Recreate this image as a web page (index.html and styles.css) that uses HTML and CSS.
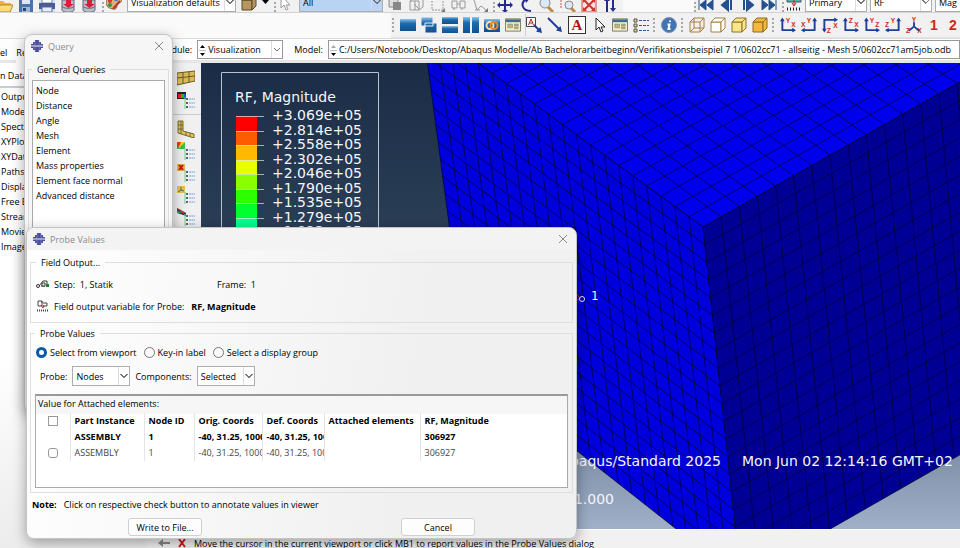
FILE: index.html
```
<!DOCTYPE html>
<html lang="en">
<head>
	<meta charset="utf-8">
	<title>Abaqus/CAE - Visualization</title>
	<meta name="viewport" content="width=device-width,initial-scale=1.0">
	<link rel="stylesheet" href="styles.css">
</head>
<body>
	<svg class="defs" aria-hidden="true">
		<defs>
			<linearGradient id="blue" x2="0" y2="1"><stop stop-color="#8cc4ea"/><stop offset=".35" stop-color="#1e6cae"/><stop offset="1" stop-color="#124f8c"/></linearGradient>
			<linearGradient id="sky" x2="0" y2="1"><stop stop-color="#1b2d46"/><stop offset=".4" stop-color="#2c4058"/><stop offset=".85" stop-color="#8292ab"/><stop offset="1" stop-color="#a0b0c8"/></linearGradient>
			<symbol id="logo" viewBox="0 0 12 12"><path d="M4 0h4v2H4zM2 2h8v2H2zM0 4h12v1.500H0zM0 6.500h12V8H0zM2 8h8v2H2zM4 10h4v2H4z" fill="#4c4fa0"/><path d="M4 0v12M8 0v12" stroke="#9d9fd4" stroke-width=".5"/></symbol>
			<symbol id="cross" viewBox="0 0 10 10"><path d="M1 1l8 8M9 1L1 9" stroke="#8a8a8a" fill="none"/></symbol>
			<symbol id="db" viewBox="0 0 16 16"><path d="M2 3v10c0 3 12 3 12 0V3z" fill="#b9c0ca" stroke="#667"/><path d="M2 9c0 3 12 3 12 0" fill="none" stroke="#667"/><path d="M6 2h5v5h3l-5.500 4L3 7h3z" fill="#d5203a"/></symbol>
			<symbol id="cubew" viewBox="0 0 16 16"><path d="M1 5h10v10H1zM5 1h10v10H5M1 5l4-4M11 5l4-4M11 15l4-4M1 15l4-4M5 1v10" fill="none" stroke="#a8803c"/></symbol>
			<symbol id="cube" viewBox="0 0 16 16"><path d="M1 5h10v10H1z"/><path d="M1 5l4-4h10l-4 4z"/><path d="M11 5l4-4v10l-4 4z"/></symbol>
			<symbol id="panel" viewBox="0 0 17 16"><path d="M.5 1.500h16v13H.5z" fill="#f4edc9" stroke="#7a7a5c"/><path d="M1 2h15v3H1z" fill="#3f6a9e"/><path d="M3 7h5v4H3zM10 7h4v2h-4zM10 10h4v2h-4z" fill="#b9b48a" stroke="#7a7a5c" stroke-width=".5"/></symbol>
			<symbol id="rows" viewBox="0 0 18 18"><path d="M9 8h2M9 12h2M9 16h2" stroke="#567" stroke-width="2"/><path d="M12 8h6M12 12h6M12 16h6" stroke="#6e9fd8" stroke-dasharray="2 .5"/><path d="M8 6v12" stroke="#7c8" stroke-width="1"/></symbol>
			<symbol id="axes" viewBox="0 0 17 16"><path d="M2.500 14V2M2 13.500h13" fill="none" stroke="#1d3f96" stroke-width="2"/><path d="M0 4l2.500-4L5 4zM13 11l4 2.500-4 2.500z" fill="#1d3f96"/></symbol>
			<symbol id="axesl" viewBox="0 0 17 16"><path d="M14.500 14V2M15 13.500H2" fill="none" stroke="#1d3f96" stroke-width="2"/><path d="M12 4l2.500-4L17 4zM4 11l-4 2.500L4 16z" fill="#1d3f96"/></symbol>
		</defs>
	</svg>

	<header class="toolbars">
		<div class="bar bar-top">
			<div class="group file">
				<svg class="ico" viewBox="0 0 16 16"><path d="M0 15V4h6l2 2h6v9z" fill="#e8b33a"/><path d="M0 15l3-7h13l-3 7z" fill="#ffdc76" stroke="#b98a25"/></svg>
				<svg class="ico" viewBox="0 0 16 16"><path d="M1 1h14v14H1z" fill="#4874ad"/><path d="M4 1h8v6H4z" fill="#dde6f2"/><path d="M4 10h8v5H4z" fill="#9db4d2"/><path d="M5 11h3v3H5z" fill="#26456f"/></svg>
				<svg class="ico hot" viewBox="0 0 16 16"><path d="M3 0h10v6H3z" fill="#fff" stroke="#789"/><path d="M0 6h16v6H0z" fill="#4b5c9a"/><path d="M3 10h10v5H3z" fill="#e9effa" stroke="#5a6a9c"/></svg>
				<svg class="ico"><use href="#db"/></svg>
				<svg class="ico"><use href="#db"/></svg>
			</div>
			<i class="grip"></i>
			<div class="group">
				<svg class="ico" viewBox="0 0 16 16"><path d="M8 1c9 0 9 6 5 7s0 6-5 6-8-3-8-7 4-6 8-6z" fill="#d9b077" stroke="#876338"/><circle cx="4" cy="6" r="2" fill="#d33"/><circle cx="4" cy="10" r="2" fill="#2a9a45"/><circle cx="10" cy="4" r="2" fill="#346fd0"/><path d="M7 14l7-8" stroke="#b33" stroke-width="2"/></svg>
				<select class="drop wide" aria-label="Color code"><option>Visualization defaults</option></select>
				<svg class="ico" viewBox="0 0 16 16"><g fill="#b59662" stroke="#5f4821"><use href="#cube"/></g></svg>
				<svg class="caret" viewBox="0 0 7 4"><path d="M0 0h7L3.500 4z"/></svg>
			</div>
			<i class="grip"></i>
			<div class="group">
				<svg class="ico" viewBox="0 0 16 16"><path d="M3 0v13l3-3 2 5 2-1-2-4h4z" fill="#fff" stroke="#999"/></svg>
				<select class="drop blue" aria-label="Selection filter"><option>All</option></select>
			</div>
			<div class="group muted">
				<svg class="ico" viewBox="0 0 16 16"><path d="M1 1h9v9H1z" fill="#ddd" stroke="#888"/><path d="M5 5h8v8H5z" fill="#888"/></svg>
				<svg class="ico" viewBox="0 0 16 16"><path d="M1 4h9v9H1zM5 1h9v9M1 4l4-3M10 13l4-3M5 7l6 6M6 4v9" fill="none" stroke="#999"/></svg>
				<svg class="ico" viewBox="0 0 16 16"><path d="M2 1v12h11V1" fill="none" stroke="#999" stroke-dasharray="2 1"/><path d="M11 15l4-4v4z" fill="#777"/></svg>
				<svg class="ico" viewBox="0 0 16 16"><path d="M1 4h5v7H1zM9 4h5v7H9zM3 13v-2M11 13v-2M6 7h3" fill="none" stroke="#999"/></svg>
				<svg class="ico" viewBox="0 0 16 16"><path d="M2 3l3 10 4-4 5 4M3 13h5" fill="none" stroke="#999"/><path d="M12 15l4-4v4z" fill="#777"/></svg>
			</div>
			<i class="grip"></i>
			<div class="group">
				<svg class="ico" viewBox="0 0 16 16"><path d="M8 1v14M1 8h14" stroke="#262a8c" stroke-width="2"/><path d="M8 0l3 3H5zM8 16l3-3H5zM0 8l3-3v6zM16 8l-3-3v6z" fill="#262a8c"/></svg>
				<svg class="ico" viewBox="0 0 16 16"><path d="M13 14C4 14 2 6 8 2" fill="none" stroke="#262a8c" stroke-width="2"/><path d="M6 0h7L8 6z" fill="#262a8c"/></svg>
				<svg class="ico" viewBox="0 0 16 16"><circle cx="6" cy="6" r="5" fill="#dbe8f6" stroke="#888"/><path d="M9 10l5 5" stroke="#c08a45" stroke-width="3"/></svg>
				<svg class="ico" viewBox="0 0 16 16"><path d="M1 11V2h10" fill="none" stroke="#c55" stroke-dasharray="2 1"/><circle cx="9" cy="8" r="4" fill="#dbe8f6" stroke="#888"/><path d="M11 11l4 4" stroke="#c08a45" stroke-width="3"/></svg>
				<svg class="ico" viewBox="0 0 16 16"><path d="M1 1h14v14H1z" fill="#fbe5e2" stroke="#c94a3f"/><path d="M3 3l10 10M13 3L3 13" stroke="#d2322a" stroke-width="2"/><path d="M2 2h4L2 6zM14 2h-4l4 4zM2 14h4l-4-4zM14 14h-4l4-4z" fill="#d2322a"/></svg>
				<svg class="ico" viewBox="0 0 16 16"><path d="M5 15V2M11 1v12" stroke="#262a8c" stroke-width="2"/><path d="M2 4l3-4 3 4zM8 11l3 4 3-4z" fill="#262a8c"/></svg>
			</div>
			<div class="blank"></div>
			<i class="grip"></i>
			<div class="group play">
				<svg class="ico" viewBox="0 0 16 16"><path d="M1 3v10M8 3v10L2 8zM15 3v10L9 8z" fill="#23508f" stroke="#23508f"/></svg>
				<svg class="ico" viewBox="0 0 16 16"><path d="M9 3v10L3 8zM12 3v10" fill="#23508f" stroke="#23508f" stroke-width="2"/></svg>
				<svg class="ico" viewBox="0 0 16 16"><path d="M7 3v10l6-5zM4 3v10" fill="#23508f" stroke="#23508f" stroke-width="2"/></svg>
				<svg class="ico" viewBox="0 0 16 16"><path d="M15 3v10M8 3v10l6-5zM1 3v10l6-5z" fill="#23508f" stroke="#23508f"/></svg>
			</div>
			<i class="grip"></i>
			<div class="group vars">
				<svg class="ico" viewBox="0 0 16 16"><path d="M1 0h14v7H1z" fill="#50b5a5" stroke="#456"/><path d="M8 4v6M6 8l2 3 2-3" stroke="#d02020" fill="none"/><path d="M1 14h14" stroke="#222" stroke-width="3" stroke-dasharray="1 2"/></svg>
				<select class="drop" aria-label="Variable type"><option>Primary</option></select>
				<select class="drop" aria-label="Variable"><option>RF</option></select>
				<select class="drop" aria-label="Component"><option>Mag</option></select>
			</div>
		</div>

		<div class="bar bar-view">
			<i class="grip"></i>
			<div class="group">
				<svg class="ico" viewBox="0 0 16 16"><path d="M0 2h16v12H0z" fill="url(#blue)"/></svg>
				<svg class="ico" viewBox="0 0 16 16"><path d="M0 0h12v9H0zM4 6h12v10H4z" fill="url(#blue)" stroke="#eef"/></svg>
				<svg class="ico" viewBox="0 0 16 16"><path d="M0 0h16v7H0z" fill="url(#blue)"/><path d="M0 9h16v7H0z" fill="url(#blue)"/></svg>
				<svg class="ico" viewBox="0 0 16 16"><path d="M0 0h7v16H0z" fill="url(#blue)"/><path d="M9 0h7v16H9z" fill="url(#blue)"/></svg>
				<svg class="ico" viewBox="0 0 16 16"><path d="M0 2h16v13H0z" fill="url(#blue)"/><g fill="none" stroke-width="2"><circle cx="6" cy="8.500" r="3.500" stroke="#ffe0a0"/><circle cx="10" cy="8.500" r="3.500" stroke="#f08a20"/></g></svg>
				<svg class="ico"><use href="#panel"/></svg>
			</div>
			<i class="sep"></i>
			<div class="group notes">
				<svg class="ico" viewBox="0 0 16 16"><path d="M.5.5h9v9h-9z" fill="#fff" stroke="#444"/><path d="M2.500 8L5 2l2.500 6M3.500 6h3" fill="none" stroke="#c01818"/><path d="M8 8l6 6" stroke="#1d3f96" stroke-width="2"/><path d="M16 16l-6-1.500 4.500-4.500z" fill="#1d3f96"/></svg>
				<svg class="ico" viewBox="0 0 16 16"><path d="M1 1l11 11" stroke="#1d3f96" stroke-width="2"/><path d="M15 15l-6-1.500 4.500-4.500z" fill="#1d3f96"/></svg>
				<b class="letter">A</b>
				<svg class="ico" viewBox="0 0 16 16"><path d="M5 1v12l3-3 2 5 2-1-2-4h4z" fill="#fff" stroke="#222"/></svg>
				<svg class="ico"><use href="#panel"/></svg>
				<svg class="ico" viewBox="0 0 16 16"><path d="M1 2h3v3H1zM1 7h3v3H1zM1 12h3v3H1z" fill="#ddd8a0" stroke="#554"/><path d="M6 3.500h10M6 8.500h10M6 13.500h10" stroke="#3a4fa0" stroke-dasharray="3 1"/></svg>
			</div>
			<i class="grip"></i>
			<svg class="ico" viewBox="0 0 16 16"><circle cx="8" cy="8" r="7.500" fill="#3f74b5" stroke="#7d93b4"/><path d="M9 3.500v1.500M6.500 7.500h2l-1 4.500h2" fill="none" stroke="#fff" stroke-width="2"/></svg>
			<i class="grip"></i>
			<div class="group">
				<svg class="ico"><use href="#cubew"/></svg>
				<svg class="ico" fill="#fff" stroke="#a8803c"><use href="#cube"/></svg>
				<svg class="ico" fill="#fbe58a" stroke="#8c7428"><use href="#cube"/></svg>
				<svg class="ico" fill="#f4b93c" stroke="#8c6a20"><use href="#cube"/></svg>
			</div>
			<i class="grip"></i>
			<div class="group red">
				<svg class="ico" viewBox="0 0 17 16"><use href="#axes"/><text x="6" y="6">Y</text><text x="12" y="10">X</text></svg>
				<svg class="ico" viewBox="0 0 17 16"><use href="#axesl"/><text x="6" y="6">Y</text><text x="0" y="10">X</text></svg>
				<svg class="ico" viewBox="0 0 17 16"><path d="M2.500 14V2.500H15" fill="none" stroke="#1d3f96" stroke-width="2"/><path d="M0 12l2.500 4L5 12zM13 0l4 2.500L13 5z" fill="#1d3f96"/><text x="12" y="11">X</text><text x="5" y="16">Z</text></svg>
				<svg class="ico" viewBox="0 0 17 16"><use href="#axes"/><text x="6" y="6">Z</text><text x="12" y="10">X</text></svg>
				<svg class="ico" viewBox="0 0 17 16"><use href="#axes"/><text x="6" y="6">Y</text><text x="12" y="10">Z</text></svg>
				<svg class="ico" viewBox="0 0 17 16"><use href="#axesl"/><text x="6" y="6">Y</text><text x="0" y="10">Z</text></svg>
				<svg class="ico" viewBox="0 0 17 16"><path d="M8.500 10V5M8 10l-5 4M9 10l5 4" fill="none" stroke="#1d3f96" stroke-width="2"/><text x="6" y="5">Y</text><text x="0" y="16">Z</text><text x="12" y="16">X</text></svg>
				<b class="num">1</b><b class="num">2</b>
			</div>
		</div>
	</header>

	<div class="context">
		<label for="module">Module:</label>
		<span class="spinbox">
			<svg class="spin" viewBox="0 0 7 14"><path d="M3.500 2L6 5H1zM3.500 13L6 10H1z"/><path d="M0 7.500h7" stroke="#bbb"/></svg>
			<select id="module" class="drop"><option>Visualization</option></select>
		</span>
		<label for="model">Model:</label>
		<span class="spinbox path">
			<svg class="spin" viewBox="0 0 7 14"><path d="M3.500 2L6 5H1z" fill="#aaa"/><path d="M3.500 13L6 10H1z"/><path d="M0 7.500h7" stroke="#bbb"/></svg>
			<input id="model" value="C:/Users/Notebook/Desktop/Abaqus Modelle/Ab Bachelorarbeitbeginn/Verifikationsbeispiel 7 1/0602cc71 - allseitig - Mesh 5/0602cc71am5job.odb">
		</span>
	</div>

	<main class="work">
		<aside class="tree">
			<div class="tabs"><span>el</span><span class="on">Results</span></div>
			<p class="session">n Data</p>
			<ul>
				<li>Output Databases</li>
				<li>Model Database</li>
				<li>Spectrums</li>
				<li>XYPlots</li>
				<li>XYData</li>
				<li>Paths</li>
				<li>Display Groups</li>
				<li>Free Body Cuts</li>
				<li>Streams</li>
				<li>Movies</li>
				<li>Images</li>
			</ul>
		</aside>
		<div class="stage">
			<div class="canvas-row">
				<nav class="toolbox">
					<svg class="tool" viewBox="0 0 18 18"><path d="M0 4l18-2v10L0 16z" fill="#d9bb5a" stroke="#6b5a22"/><path d="M0 9l18-2M6 3v12M12 3v11" stroke="#6b5a22"/></svg>
					<svg class="tool" viewBox="0 0 18 18"><path d="M0 1h9v7H0z" fill="#222"/><path d="M1 3h3v4H1z" fill="#d22"/><path d="M4 3h3v4H4z" fill="#2b2"/><path d="M7 3h2v4H7z" fill="#25d"/><use href="#rows"/></svg>
					<hr>
					<svg class="tool" viewBox="0 0 18 18"><path d="M1 1h5v10l11 3v4L1 13z" fill="#d9c765" stroke="#7b6a2a"/><path d="M1 5h5M1 9h5M4 1v13M9 12v4M13 13v4" stroke="#7b6a2a"/></svg>
					<svg class="tool" viewBox="0 0 18 18"><path d="M0 0h8v7H0z" fill="#3fbe4f"/><path d="M0 7V0h5z" fill="#e33"/><path d="M4 0h4L1 7z" fill="#ffd800"/><use href="#rows"/></svg>
					<svg class="tool" viewBox="0 0 18 18"><path d="M0 0h8v7H0z" fill="#efb04e"/><path d="M2 1l4 5M6 1L2 6" stroke="#c31414" stroke-width="2"/><use href="#rows"/></svg>
					<svg class="tool" viewBox="0 0 18 18"><path d="M0 0h8v7H0z" fill="#efc04e"/><path d="M4 1v3L1 6M4 4l3 1" fill="none" stroke="#475" stroke-width="1"/><use href="#rows"/></svg>
					<svg class="tool" viewBox="0 0 18 18"><path d="M0 0l9 5v3L0 5z" fill="#345"/><path d="M0 0l9 5H5z" fill="#c33"/><path d="M0 3l5 2H0z" fill="#3a4"/><use href="#rows"/></svg>
				</nav>
				<svg class="viewport" id="viewport">
					<rect width="100%" height="100%" fill="url(#sky)"/>
					<g transform="translate(-201 -63)">
						<g id="mesh"></g>
						<path d="M221.500 260V72.500h157V260" fill="none" stroke="#b9c3d0"/>
						<text x="235" y="102">RF, Magnitude</text>
						<g id="legend"></g>
						<path d="M574 291l6 7-6 5" fill="none" stroke="#e02020"/>
						<circle cx="582" cy="299" r="2.500" fill="none" stroke="#eee"/>
						<text x="591" y="300" class="mono">1</text>
						<text x="721" y="466" text-anchor="end">Abaqus/Standard 2025</text>
						<text x="742" y="466">Mon Jun 02 12:14:16 GMT+02</text>
						<text x="614" y="504" text-anchor="end">1.000</text>
					</g>
				</svg>
			</div>
			<footer class="prompt">
				<svg viewBox="0 0 12 8"><path d="M0 4l5-4v3h7v2H5v3z" fill="#888"/></svg>
				<svg class="stop" viewBox="0 0 10 10"><path d="M2 1l6 8M8 1L2 9" stroke="#d01818" stroke-width="2"/></svg>
				<span>Move the cursor in the current viewport or click MB1 to report values in the Probe Values dialog</span>
			</footer>
		</div>
	</main>

	<section class="window query">
		<div class="title"><svg><use href="#logo"/></svg><span>Query</span><button aria-label="Close"><svg><use href="#cross"/></svg></button></div>
		<fieldset>
			<legend>General Queries</legend>
			<ul>
				<li>Node</li>
				<li>Distance</li>
				<li>Angle</li>
				<li>Mesh</li>
				<li>Element</li>
				<li>Mass properties</li>
				<li>Element face normal</li>
				<li>Advanced distance</li>
			</ul>
		</fieldset>
	</section>

	<section class="window probe">
		<div class="title"><svg><use href="#logo"/></svg><span>Probe Values</span><button aria-label="Close"><svg><use href="#cross"/></svg></button></div>
		<fieldset class="field">
			<legend>Field Output...</legend>
			<div class="line">
				<svg viewBox="0 0 13 12"><path d="M3 8l4-5h4v4M5 8h4" fill="none" stroke="#333"/><circle cx="2" cy="8" r="1.500" fill="#fff" stroke="#333"/><path d="M6 5h3v3H6z" fill="#fff" stroke="#333"/><path d="M10 6h3v3h-3z" fill="#2a7a35"/></svg>
				<span class="step">Step: &nbsp;1, Statik</span><span>Frame: &nbsp;1</span>
			</div>
			<div class="line">
				<svg viewBox="0 0 13 12"><path d="M2 1h4v5H2zM7 3h4v3H7M5 2h2" fill="none" stroke="#444"/><path d="M5 5l2 3 1-3" fill="none" stroke="#c22"/><path d="M1 10.500h11" stroke="#444" stroke-width="2" stroke-dasharray="1 1"/></svg>
				<span>Field output variable for Probe:</span><b>RF, Magnitude</b>
			</div>
		</fieldset>
		<fieldset class="values">
			<legend>Probe Values</legend>
			<div class="radios">
				<label><input type="radio" name="from" checked>Select from viewport</label>
				<label><input type="radio" name="from">Key-in label</label>
				<label><input type="radio" name="from">Select a display group</label>
			</div>
			<div class="picks">
				<label for="probe">Probe:</label>
				<select id="probe" class="drop"><option>Nodes</option></select>
				<label for="comp">Components:</label>
				<select id="comp" class="drop"><option>Selected</option></select>
			</div>
			<div class="tablebox">
				<table>
					<caption>Value for Attached elements:</caption>
					<colgroup><col class="c1"><col class="c2"><col class="c3"><col class="c4"><col class="c5"><col class="c6"><col></colgroup>
					<thead>
						<tr><th><input type="checkbox" class="square" aria-label="Select all"></th><th>Part Instance</th><th>Node ID</th><th>Orig. Coords</th><th>Def. Coords</th><th>Attached elements</th><th>RF, Magnitude</th></tr>
					</thead>
					<tbody>
						<tr class="now"><td></td><td>ASSEMBLY</td><td>1</td><td>-40, 31.25, 1000</td><td>-40, 31.25, 1000</td><td></td><td>306927</td></tr>
						<tr><td><input type="checkbox" aria-label="Annotate node 1"></td><td>ASSEMBLY</td><td>1</td><td>-40, 31.25, 1000</td><td>-40, 31.25, 1000</td><td></td><td>306927</td></tr>
					</tbody>
				</table>
			</div>
		</fieldset>
		<p class="note"><b>Note:</b>Click on respective check button to annotate values in viewer</p>
		<div class="actions"><button>Write to File...</button><button>Cancel</button></div>
	</section>

	<script src="script.js"></script>
</body>
</html>
```
FILE: styles.css
```
* { margin: 0; padding: 0; box-sizing: border-box; }
body {
	height: 100vh;
	display: flex;
	flex-direction: column;
	overflow: hidden;
	position: relative;
	background: #fafafa;
	color: #000;
	font: 9px/15px "Open Sans", "Noto Sans", sans-serif;
}
ul { list-style: none; }
button, input, select { font: inherit; color: inherit; }
svg { display: block; flex: none; }
.defs { position: absolute; width: 0; height: 0; }

/* toolbars */
.bar { display: flex; align-items: center; background: #f1f1f1; }
.bar-top { height: 13px; align-items: flex-end; overflow: hidden; border-bottom: 1px solid #d4d4d4; }
.bar-view { height: 25px; margin-left: 391px; padding-left: 1px; gap: 4px; overflow: hidden; border-bottom: 1px solid #e2e2e2; }
.group { display: flex; align-items: center; gap: 5px; flex: none; }
.bar-top .group { gap: 5px; margin-right: 5px; }
.bar-top .file { margin-left: -3px; }
.bar-top .vars { gap: 3px; }
.blank { width: 71px; height: 13px; flex: none; background: #fafafa; }
.ico { width: 16px; height: 16px; }
.bar-top .ico { margin-bottom: -1px; }
.hot { background: #cfe4fa; }
.caret { width: 7px; height: 4px; }
.grip { flex: none; width: 4px; height: 14px; border-left: 2px dotted #a8a8a8; }
.sep { flex: none; width: 1px; height: 22px; margin-right: -4px; background: #cfcfcf; }
.letter {
	width: 18px;
	height: 18px;
	border: 1px solid #333;
	background: #fff;
	color: #b01414;
	font: bold 15px/16px "Liberation Serif", serif;
	text-align: center;
}
.red text { font: bold 7px "Liberation Sans", sans-serif; fill: #d02818; }
.bar-view .red { gap: 5px; }
.num { width: 14px; color: #d02818; font: bold 14px/16px "Liberation Sans", sans-serif; text-align: center; }

.drop {
	appearance: none;
	height: 20px;
	padding: 0 11px 0 3px;
	border: 1px solid #adadad;
	border-radius: 0;
	background-color: #fff;
	background-image:
		linear-gradient(45deg, transparent 50%, #777 50%, #777 65%, transparent 65%),
		linear-gradient(-45deg, transparent 50%, #777 50%, #777 65%, transparent 65%),
		linear-gradient(#dcdcdc, #dcdcdc);
	background-size: 4px 4px, 4px 4px, 1px 100%;
	background-position: right 5px top 7px, right 1px top 7px, right 10px top 0;
	background-repeat: no-repeat;
}
.bar-top .drop { width: 62px; }
.bar-top .wide { width: 109px; }
.bar-top .blue { width: 84px; background-color: #b9d4f2; }

/* context bar */
.context { display: flex; align-items: center; height: 24px; padding-left: 158px; background: #fdfdfd; border-bottom: 2px solid #e6e6e6; border-top: 1px solid #ddd; }
.context label { flex: none; }
.spinbox { display: flex; align-items: center; height: 19px; width: 86px; margin: 0 11px 0 5px; border: 1px solid #999; background: #fff; }
.spin { width: 7px; height: 14px; margin: 0 1px; }
.spinbox .drop { flex: 1; height: 17px; border: 0; padding-left: 1px; }
.path { flex: 1 0 600px; margin-right: 0; }
.path input { flex: 1; border: 0; outline: 0; min-width: 0; margin-left: 1px; background: none; }

/* model tree and viewport */
.work { flex: 1; display: flex; min-height: 0; border-top: 1px solid #e6e6e6; }
.tree { width: 172px; flex: none; background: linear-gradient(#fff 60%, #ececec); }
.tabs { display: flex; gap: 9px; height: 18px; margin-top: -18px; }
.tabs .on { background: #fff; }
.session { padding: 5px 0 3px; border-bottom: 2px solid #ccc; }
.tree ul { padding: 1px; }
.stage { flex: 1; display: flex; flex-direction: column; min-width: 0; margin-left: -25px; }
.canvas-row { flex: 1; display: flex; min-height: 0; padding-left: 25px; }
.toolbox { width: 29px; display: flex; flex-direction: column; gap: 4px; padding: 6px 5px; overflow: hidden; background: #f0f0f0; flex: none; }
.toolbox hr { border: 0; border-top: 1px solid #ccc; margin: 1px -5px; }
.tool { width: 18px; height: 18px; }
.viewport { flex: 1; height: 100%; min-width: 0; overflow: hidden; }
.viewport text { fill: #f4f6fa; font: 14px "DejaVu Sans", sans-serif; }
.viewport .mono { font: 12px "DejaVu Sans Mono", monospace; }
.prompt { display: flex; align-items: flex-end; gap: 7px; height: 19px; padding-left: 11px; background: #f1f1f1; border-top: 1px solid #fff; }
.prompt svg { width: 12px; height: 8px; margin-bottom: 1px; }
.prompt .stop { width: 10px; height: 10px; margin-bottom: 0; }
.prompt span { margin-bottom: -3px; white-space: nowrap; }

/* floating windows */
.window { position: absolute; border: 1px solid #c4c4c4; border-radius: 8px; background: #f6f6f6; box-shadow: 0 4px 14px rgba(0, 0, 0, .35); }
.title { display: flex; align-items: center; gap: 5px; height: 22px; padding: 0 6px; color: #8c8c8c; }
.title svg { width: 12px; height: 12px; }
.title button { margin-left: auto; border: 0; background: none; padding: 2px; }
.title button svg { width: 10px; height: 10px; }
fieldset { border: 1px solid #dedede; min-width: 0; }
legend { padding: 0 5px; margin-left: 3px; }
.query { left: 24px; top: 34px; width: 149px; height: 379px; }
.query fieldset { height: 340px; margin: 5px 3px 0; }
.query ul { height: 320px; margin: 3px 3px 0; padding: 2px 3px; border: 1px solid #aaa; background: #fff; }
.probe { left: 26px; top: 227px; width: 551px; background: linear-gradient(100deg, #fff, #f0f0f0 70%); }
.probe .title { border-radius: 8px 8px 0 0; background: #f3f3f3; }
.probe fieldset { margin: 5px 3px 0; padding: 0 5px; }
.probe legend { margin-left: 0; }
.probe .field { height: 68px; padding-top: 3px; }
.line { display: flex; align-items: center; gap: 5px; height: 22px; }
.line svg { width: 13px; height: 12px; }
.line b { margin-left: 2px; }
.step { width: 158px; }
.probe .values { margin-top: 3px; padding: 0 4px 4px; }
.radios { display: flex; gap: 6px; height: 22px; align-items: center; }
.radios label { display: flex; align-items: center; gap: 3px; }
.radios input {
	appearance: none;
	width: 11px;
	height: 11px;
	margin-left: 1px;
	border: 1px solid #777;
	border-radius: 50%;
	background: #fafafa;
}
.radios input:checked { border: 3px solid #0a5aa8; background: #fff; }
.picks { display: flex; align-items: center; gap: 5px; height: 24px; margin: 1px 0 6px 5px; }
.picks .drop { width: 58px; }
.tablebox { height: 94px; border: 1px solid #aaa; border-top: 2px solid #999; background: linear-gradient(#f6f6f6 18px, #fff 18px); }
table { width: 100%; table-layout: fixed; border-collapse: collapse; }
caption { height: 17px; line-height: 16px; padding-left: 2px; text-align: left; }
th, td { height: 16px; padding-left: 4px; overflow: hidden; border-left: 1px solid #e4e4e4; line-height: 16px; text-align: left; white-space: nowrap; }
th:first-child, td:first-child { border: 0; padding-left: 12px; }
.now { font-weight: bold; }
tbody tr:last-child { color: #444; }
table input { appearance: none; display: block; width: 10px; height: 10px; border: 1px solid #999; border-radius: 3px; background: #fff; }
table .square { border-radius: 0; }
.c1 { width: 34px; }
.c2 { width: 74px; }
.c3 { width: 50px; }
.c4 { width: 68px; }
.c5 { width: 62px; }
.c6 { width: 96px; }
.note { display: flex; gap: 7px; padding: 4px 5px; }
.actions { display: flex; justify-content: space-between; padding: 2px 101px; }
.actions button { width: 74px; height: 18px; border: 1px solid #d0d0d0; border-radius: 3px; background: #fdfdfd; line-height: 15px; }
```
FILE: script.js
```
var NS = 'http://www.w3.org/2000/svg';
var N = 20; // elements along each cube edge

function add(parent, name, attrs, text) {
	var el = document.createElementNS(NS, name);
	for (var key in attrs) el.setAttribute(key, attrs[key]);
	if (text) el.textContent = text;
	parent.appendChild(el);
}

function mix(a, b, t) {
	return [a[0] + (b[0] - a[0]) * t, a[1] + (b[1] - a[1]) * t];
}

// a-b and d-c are opposite edges of the face
function face(a, b, c, d, color) {
	var mesh = document.getElementById('mesh');
	var path = '';
	for (var i = 0; i <= N; i++) {
		var t = i / N;
		path += 'M' + mix(a, b, t) + 'L' + mix(d, c, t);
		path += 'M' + mix(a, d, t) + 'L' + mix(b, c, t);
	}
	add(mesh, 'polygon', { points: [a, b, c, d].join(' '), fill: color });
	add(mesh, 'path', { d: path, stroke: '#000030', 'stroke-opacity': .7, fill: 'none' });
}

var corner = [703, 227], left = [422, 22], right = [1066, 22], bottom = [741, 580];
face(corner, left, [778, -165], right, '#0000ec');
face(corner, left, [468, 365], bottom, '#0000dc');
face(corner, right, [1096, 377], bottom, '#000094');

// contour legend
var colors = ['#ff0000', '#ff5c00', '#ffb900', '#e8ff00', '#8bff00', '#2eff00', '#00ff2e', '#00ff8b'];
var values = ['+3.069e+05', '+2.814e+05', '+2.558e+05', '+2.302e+05', '+2.046e+05', '+1.790e+05', '+1.535e+05', '+1.279e+05', '+1.023e+05'];
var legend = document.getElementById('legend');
values.forEach(function (value, i) {
	var y = Math.round(116 + i * 14.5);
	if (colors[i]) add(legend, 'rect', { x: 236, y: y, width: 21, height: 15, fill: colors[i] });
	add(legend, 'path', { d: 'M236 ' + (y + .5) + 'h28', stroke: '#dfe6e0', 'stroke-opacity': .7 });
	add(legend, 'text', { x: 272, y: y + 4 }, value);
});
```
